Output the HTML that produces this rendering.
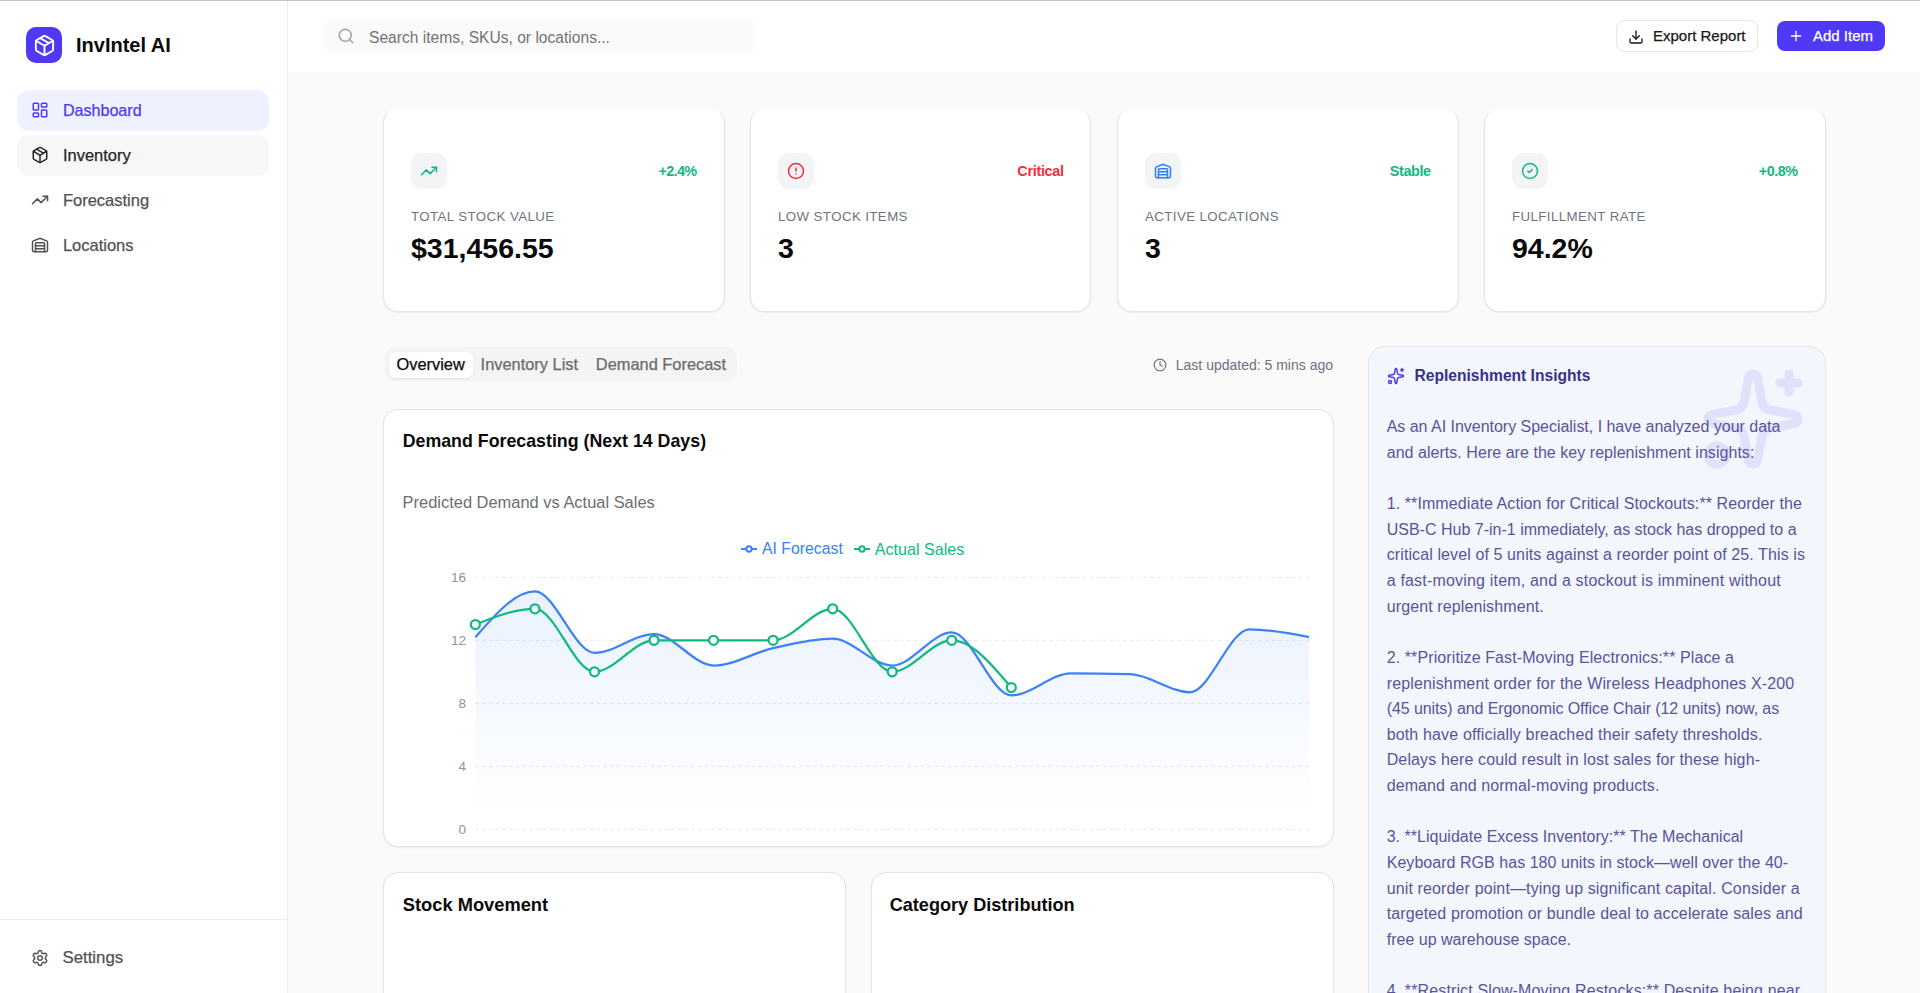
<!DOCTYPE html>
<html><head><meta charset="utf-8"><title>InvIntel AI</title>
<style>
*{box-sizing:border-box;margin:0;padding:0}
html,body{width:1920px;height:993px;overflow:hidden;background:#fafafa;font-family:"Liberation Sans",sans-serif;}
.t{position:absolute;white-space:nowrap}
.ic{position:absolute;display:block}
.box{position:absolute}
.card{position:absolute;background:#fff;border:1px solid #e3e3e3;border-radius:15px;box-shadow:0 1px 2px rgba(0,0,0,0.06)}
</style></head><body>

<div class="box" style="left:0;top:0;width:1920px;height:1px;background:#c4c4c4;z-index:10"></div>
<div class="box" style="left:0;top:0;width:288px;height:993px;background:#fff;border-right:1px solid #ececec"></div>
<div class="box" style="left:26px;top:27px;width:36px;height:36px;background:#4f39f6;border-radius:10px"></div>
<svg class="ic" style="left:32.86px;top:33.86px;width:23px;height:23px;" viewBox="0 0 24 24" fill="none" stroke="#fff" stroke-width="2" stroke-linecap="round" stroke-linejoin="round"><path d="M11 21.73a2 2 0 0 0 2 0l7-4A2 2 0 0 0 21 16V8a2 2 0 0 0-1-1.73l-7-4a2 2 0 0 0-2 0l-7 4A2 2 0 0 0 3 8v8a2 2 0 0 0 1 1.73z"/><path d="M12 22V12"/><path d="m3.3 7 7.703 4.734a2 2 0 0 0 1.994 0L20.7 7"/><path d="m7.5 4.27 9 5.15"/></svg>
<div class="t" style="left:76px;top:34.87px;font-size:20px;line-height:20px;color:#0a0a0a;font-weight:700;">InvIntel AI</div>
<div class="box" style="left:17px;top:90px;width:252px;height:41px;background:#eef2ff;border-radius:12px"></div>
<div class="box" style="left:17px;top:135px;width:252px;height:41px;background:#f7f7f7;border-radius:12px"></div>
<svg class="ic" style="left:30.7px;top:101.3px;width:18px;height:18px;" viewBox="0 0 24 24" fill="none" stroke="#4f39f6" stroke-width="2" stroke-linecap="round" stroke-linejoin="round"><rect width="7" height="9" x="3" y="3" rx="1"/><rect width="7" height="5" x="14" y="3" rx="1"/><rect width="7" height="9" x="14" y="12" rx="1"/><rect width="7" height="5" x="3" y="16" rx="1"/></svg>
<div class="t" style="left:62.9px;top:102.37px;font-size:16.1px;line-height:16.1px;color:#4f39f6;font-weight:400;-webkit-text-stroke:0.25px currentColor">Dashboard</div>
<svg class="ic" style="left:30.7px;top:146.3px;width:18px;height:18px;" viewBox="0 0 24 24" fill="none" stroke="#262626" stroke-width="2" stroke-linecap="round" stroke-linejoin="round"><path d="M11 21.73a2 2 0 0 0 2 0l7-4A2 2 0 0 0 21 16V8a2 2 0 0 0-1-1.73l-7-4a2 2 0 0 0-2 0l-7 4A2 2 0 0 0 3 8v8a2 2 0 0 0 1 1.73z"/><path d="M12 22V12"/><path d="m3.3 7 7.703 4.734a2 2 0 0 0 1.994 0L20.7 7"/><path d="m7.5 4.27 9 5.15"/></svg>
<div class="t" style="left:62.9px;top:147.03px;font-size:16.5px;line-height:16.5px;color:#262626;font-weight:400;-webkit-text-stroke:0.25px currentColor">Inventory</div>
<svg class="ic" style="left:30.7px;top:191.3px;width:18px;height:18px;" viewBox="0 0 24 24" fill="none" stroke="#525252" stroke-width="2" stroke-linecap="round" stroke-linejoin="round"><polyline points="22 7 13.5 15.5 8.5 10.5 2 17"/><polyline points="16 7 22 7 22 13"/></svg>
<div class="t" style="left:62.9px;top:192.03px;font-size:16.5px;line-height:16.5px;color:#525252;font-weight:400;-webkit-text-stroke:0.25px currentColor">Forecasting</div>
<svg class="ic" style="left:30.7px;top:236.3px;width:18px;height:18px;" viewBox="0 0 24 24" fill="none" stroke="#525252" stroke-width="2" stroke-linecap="round" stroke-linejoin="round"><path d="M18 21V10a1 1 0 0 0-1-1H7a1 1 0 0 0-1 1v11"/><path d="M22 19a2 2 0 0 1-2 2H4a2 2 0 0 1-2-2V8.35a2 2 0 0 1 1.26-1.86l8-3.2a2 2 0 0 1 1.48 0l8 3.2A2 2 0 0 1 22 8.35z"/><path d="M6 13h12"/><path d="M6 17h12"/></svg>
<div class="t" style="left:62.9px;top:237.03px;font-size:16.5px;line-height:16.5px;color:#525252;font-weight:400;-webkit-text-stroke:0.25px currentColor">Locations</div>
<div class="box" style="left:0;top:919px;width:287px;height:1px;background:#ececec"></div>
<svg class="ic" style="left:30.5px;top:949px;width:18px;height:18px;" viewBox="0 0 24 24" fill="none" stroke="#525252" stroke-width="2" stroke-linecap="round" stroke-linejoin="round"><path d="M9.671 4.136a2.34 2.34 0 0 1 4.659 0 2.34 2.34 0 0 0 3.319 1.915 2.34 2.34 0 0 1 2.33 4.033 2.34 2.34 0 0 0 0 3.831 2.34 2.34 0 0 1-2.33 4.033 2.34 2.34 0 0 0-3.319 1.915 2.34 2.34 0 0 1-4.659 0 2.34 2.34 0 0 0-3.32-1.915 2.34 2.34 0 0 1-2.33-4.033 2.34 2.34 0 0 0 0-3.831A2.34 2.34 0 0 1 6.35 6.051a2.34 2.34 0 0 0 3.319-1.915"/><circle cx="12" cy="12" r="3"/></svg>
<div class="t" style="left:62.5px;top:950.38px;font-size:16.8px;line-height:16.8px;color:#525252;font-weight:400;-webkit-text-stroke:0.25px currentColor">Settings</div>
<div class="box" style="left:288px;top:0;width:1632px;height:72px;background:#fff"></div>
<div class="box" style="left:324px;top:18px;width:431px;height:36px;background:#fafafa;border-radius:10px"></div>
<svg class="ic" style="left:336.75px;top:27.2px;width:18px;height:18px;" viewBox="0 0 24 24" fill="none" stroke="#a3a3a3" stroke-width="2" stroke-linecap="round" stroke-linejoin="round"><circle cx="11" cy="11" r="8"/><path d="m21 21-4.3-4.3"/></svg>
<div class="t" style="left:369px;top:29.59px;font-size:15.6px;line-height:15.6px;color:#737373;font-weight:400;">Search items, SKUs, or locations...</div>
<div class="box" style="left:1616px;top:20px;width:142px;height:32px;background:#fff;border:1px solid #e5e5e5;border-radius:8px"></div>
<svg class="ic" style="left:1628px;top:28.8px;width:16px;height:16px;" viewBox="0 0 24 24" fill="none" stroke="#171717" stroke-width="2" stroke-linecap="round" stroke-linejoin="round"><path d="M21 15v4a2 2 0 0 1-2 2H5a2 2 0 0 1-2-2v-4"/><polyline points="7 10 12 15 17 10"/><line x1="12" x2="12" y1="15" y2="3"/></svg>
<div class="t" style="left:1653px;top:28.10px;font-size:15px;line-height:15px;color:#171717;font-weight:400;-webkit-text-stroke:0.25px currentColor">Export Report</div>
<div class="box" style="left:1777px;top:21px;width:108px;height:30px;background:#4f39f6;border-radius:8px"></div>
<svg class="ic" style="left:1787.5px;top:28px;width:16px;height:16px;" viewBox="0 0 24 24" fill="none" stroke="#fff" stroke-width="2" stroke-linecap="round" stroke-linejoin="round"><path d="M5 12h14"/><path d="M12 5v14"/></svg>
<div class="t" style="left:1813px;top:28.10px;font-size:15px;line-height:15px;color:#fff;font-weight:400;-webkit-text-stroke:0.25px currentColor">Add Item</div>
<div class="card" style="left:383px;top:108px;width:342px;height:204px;border-top-color:#fff"></div>
<div class="box" style="left:411px;top:153px;width:36px;height:36px;background:#f3f4f6;border-radius:11px"></div>
<svg class="ic" style="left:420px;top:162px;width:18px;height:18px;" viewBox="0 0 24 24" fill="none" stroke="#10b981" stroke-width="2" stroke-linecap="round" stroke-linejoin="round"><polyline points="22 7 13.5 15.5 8.5 10.5 2 17"/><polyline points="16 7 22 7 22 13"/></svg>
<div class="t" style="right:1223.7px;top:164.11px;font-size:14.4px;line-height:14.4px;color:#10b981;font-weight:700;letter-spacing:-0.7px">+2.4%</div>
<div class="t" style="left:411px;top:209.94px;font-size:13.3px;line-height:13.3px;color:#6f7480;font-weight:400;letter-spacing:0.4px">TOTAL STOCK VALUE</div>
<div class="t" style="left:411px;top:234.07px;font-size:28.5px;line-height:28.5px;color:#0a0a0a;font-weight:700;">$31,456.55</div>
<div class="card" style="left:750px;top:108px;width:341px;height:204px;border-top-color:#fff"></div>
<div class="box" style="left:778px;top:153px;width:36px;height:36px;background:#f3f4f6;border-radius:11px"></div>
<svg class="ic" style="left:787px;top:162px;width:18px;height:18px;" viewBox="0 0 24 24" fill="none" stroke="#fb2c36" stroke-width="2" stroke-linecap="round" stroke-linejoin="round"><circle cx="12" cy="12" r="10"/><line x1="12" x2="12" y1="8" y2="12"/><line x1="12" x2="12.01" y1="16" y2="16"/></svg>
<div class="t" style="right:856.3px;top:164.11px;font-size:14.4px;line-height:14.4px;color:#fb2c36;font-weight:700;letter-spacing:-0.3px">Critical</div>
<div class="t" style="left:778px;top:209.94px;font-size:13.3px;line-height:13.3px;color:#6f7480;font-weight:400;letter-spacing:0.4px">LOW STOCK ITEMS</div>
<div class="t" style="left:778px;top:234.07px;font-size:28.5px;line-height:28.5px;color:#0a0a0a;font-weight:700;">3</div>
<div class="card" style="left:1117px;top:108px;width:342px;height:204px;border-top-color:#fff"></div>
<div class="box" style="left:1145px;top:153px;width:36px;height:36px;background:#f3f4f6;border-radius:11px"></div>
<svg class="ic" style="left:1154px;top:162px;width:18px;height:18px;" viewBox="0 0 24 24" fill="none" stroke="#2b7fff" stroke-width="2" stroke-linecap="round" stroke-linejoin="round"><path d="M18 21V10a1 1 0 0 0-1-1H7a1 1 0 0 0-1 1v11"/><path d="M22 19a2 2 0 0 1-2 2H4a2 2 0 0 1-2-2V8.35a2 2 0 0 1 1.26-1.86l8-3.2a2 2 0 0 1 1.48 0l8 3.2A2 2 0 0 1 22 8.35z"/><path d="M6 13h12"/><path d="M6 17h12"/></svg>
<div class="t" style="right:489.4000000000001px;top:164.11px;font-size:14.4px;line-height:14.4px;color:#10b981;font-weight:700;letter-spacing:-0.4px">Stable</div>
<div class="t" style="left:1145px;top:209.94px;font-size:13.3px;line-height:13.3px;color:#6f7480;font-weight:400;letter-spacing:0.4px">ACTIVE LOCATIONS</div>
<div class="t" style="left:1145px;top:234.07px;font-size:28.5px;line-height:28.5px;color:#0a0a0a;font-weight:700;">3</div>
<div class="card" style="left:1484px;top:108px;width:342px;height:204px;border-top-color:#fff"></div>
<div class="box" style="left:1512px;top:153px;width:36px;height:36px;background:#f3f4f6;border-radius:11px"></div>
<svg class="ic" style="left:1521px;top:162px;width:18px;height:18px;" viewBox="0 0 24 24" fill="none" stroke="#10b981" stroke-width="2" stroke-linecap="round" stroke-linejoin="round"><circle cx="12" cy="12" r="10"/><path d="m9 12 2 2 4-4"/></svg>
<div class="t" style="right:122.5px;top:164.11px;font-size:14.4px;line-height:14.4px;color:#10b981;font-weight:700;letter-spacing:-0.5px">+0.8%</div>
<div class="t" style="left:1512px;top:209.94px;font-size:13.3px;line-height:13.3px;color:#6f7480;font-weight:400;letter-spacing:0.4px">FULFILLMENT RATE</div>
<div class="t" style="left:1512px;top:234.07px;font-size:28.5px;line-height:28.5px;color:#0a0a0a;font-weight:700;">94.2%</div>
<div class="box" style="left:385px;top:347px;width:352px;height:35px;background:#f4f4f4;border-radius:10px"></div>
<div class="box" style="left:389px;top:352px;width:83.5px;height:26px;background:#fff;border-radius:7px;box-shadow:0 1px 2px rgba(0,0,0,0.08)"></div>
<div class="t" style="left:396.5px;top:356.12px;font-size:16.4px;line-height:16.4px;color:#0a0a0a;font-weight:400;-webkit-text-stroke:0.25px currentColor">Overview</div>
<div class="t" style="left:480.6px;top:356.12px;font-size:16.4px;line-height:16.4px;color:#6b6b6b;font-weight:400;-webkit-text-stroke:0.25px currentColor">Inventory List</div>
<div class="t" style="left:595.8px;top:356.12px;font-size:16.4px;line-height:16.4px;color:#6b6b6b;font-weight:400;-webkit-text-stroke:0.25px currentColor">Demand Forecast</div>
<svg class="ic" style="left:1153px;top:357.5px;width:14px;height:14px;" viewBox="0 0 24 24" fill="none" stroke="#737373" stroke-width="2" stroke-linecap="round" stroke-linejoin="round"><circle cx="12" cy="12" r="10"/><polyline points="12 6 12 12 16 14"/></svg>
<div class="t" style="left:1175.8px;top:358.05px;font-size:14px;line-height:14px;color:#6b7280;font-weight:400;">Last updated: 5 mins ago</div>
<div class="card" style="left:383px;top:409px;width:951px;height:438px"></div>
<div class="t" style="left:402.7px;top:432.63px;font-size:17.8px;line-height:17.8px;color:#0a0a0a;font-weight:700;">Demand Forecasting (Next 14 Days)</div>
<div class="t" style="left:402.6px;top:493.88px;font-size:16.45px;line-height:16.45px;color:#6e6e6e;font-weight:400;">Predicted Demand vs Actual Sales</div>
<svg class="ic" style="left:741px;top:541px;width:16px;height:16px" viewBox="0 0 32 32"><path stroke-width="4" fill="none" stroke="#3b82f6" d="M0,16h10.667A5.333,5.333,0,1,1,21.333,16H32M21.333,16A5.333,5.333,0,1,1,10.667,16"/></svg>
<div class="t" style="left:762px;top:541.13px;font-size:15.8px;line-height:15.8px;color:#3b82f6;font-weight:400;">AI Forecast</div>
<svg class="ic" style="left:853.7px;top:541px;width:16px;height:16px" viewBox="0 0 32 32"><path stroke-width="4" fill="none" stroke="#10b981" d="M0,16h10.667A5.333,5.333,0,1,1,21.333,16H32M21.333,16A5.333,5.333,0,1,1,10.667,16"/></svg>
<div class="t" style="left:874.8px;top:540.87px;font-size:16.1px;line-height:16.1px;color:#10b981;font-weight:400;">Actual Sales</div>
<svg class="ic" style="left:0;top:0;width:1920px;height:993px;overflow:visible" viewBox="0 0 1920 993"><defs><linearGradient id="gf" x1="0" y1="0" x2="0" y2="1"><stop offset="5%" stop-color="#3b82f6" stop-opacity="0.1"/><stop offset="95%" stop-color="#3b82f6" stop-opacity="0"/></linearGradient></defs><line x1="475.4" x2="1309.0" y1="577.30" y2="577.30" stroke="#e5e7eb" stroke-dasharray="3.375 3.375"/><text x="466" y="582.20" text-anchor="end" font-size="13.5" fill="#8e92a3" font-family="Liberation Sans">16</text><line x1="475.4" x2="1309.0" y1="640.30" y2="640.30" stroke="#e5e7eb" stroke-dasharray="3.375 3.375"/><text x="466" y="645.20" text-anchor="end" font-size="13.5" fill="#8e92a3" font-family="Liberation Sans">12</text><line x1="475.4" x2="1309.0" y1="703.30" y2="703.30" stroke="#e5e7eb" stroke-dasharray="3.375 3.375"/><text x="466" y="708.20" text-anchor="end" font-size="13.5" fill="#8e92a3" font-family="Liberation Sans">8</text><line x1="475.4" x2="1309.0" y1="766.30" y2="766.30" stroke="#e5e7eb" stroke-dasharray="3.375 3.375"/><text x="466" y="771.20" text-anchor="end" font-size="13.5" fill="#8e92a3" font-family="Liberation Sans">4</text><line x1="475.4" x2="1309.0" y1="829.30" y2="829.30" stroke="#e5e7eb" stroke-dasharray="3.375 3.375"/><text x="466" y="834.20" text-anchor="end" font-size="13.5" fill="#8e92a3" font-family="Liberation Sans">0</text><path d="M475.40,637.15C495.25,614.31,515.10,591.47,534.94,591.47C554.79,591.47,574.64,652.90,594.49,652.90C614.33,652.90,634.18,634.00,654.03,634.00C673.88,634.00,693.72,665.50,713.57,665.50C733.42,665.50,753.27,652.64,773.11,648.17C792.96,643.71,812.81,638.72,832.66,638.72C852.50,638.72,872.35,665.50,892.20,665.50C912.05,665.50,931.90,632.42,951.74,632.42C971.59,632.42,991.44,695.42,1011.29,695.42C1031.13,695.42,1050.98,673.38,1070.83,673.38C1090.68,673.38,1110.52,673.64,1130.37,674.16C1150.22,674.69,1170.07,692.27,1189.91,692.27C1209.76,692.27,1229.61,629.27,1249.46,629.27C1269.30,629.27,1289.15,633.21,1309.00,637.15L1309.0,829.3L475.4,829.3Z" fill="url(#gf)" stroke="none"/><path d="M475.40,637.15C495.25,614.31,515.10,591.47,534.94,591.47C554.79,591.47,574.64,652.90,594.49,652.90C614.33,652.90,634.18,634.00,654.03,634.00C673.88,634.00,693.72,665.50,713.57,665.50C733.42,665.50,753.27,652.64,773.11,648.17C792.96,643.71,812.81,638.72,832.66,638.72C852.50,638.72,872.35,665.50,892.20,665.50C912.05,665.50,931.90,632.42,951.74,632.42C971.59,632.42,991.44,695.42,1011.29,695.42C1031.13,695.42,1050.98,673.38,1070.83,673.38C1090.68,673.38,1110.52,673.64,1130.37,674.16C1150.22,674.69,1170.07,692.27,1189.91,692.27C1209.76,692.27,1229.61,629.27,1249.46,629.27C1269.30,629.27,1289.15,633.21,1309.00,637.15" fill="none" stroke="#3b82f6" stroke-width="2.25"/><path d="M475.40,624.55C495.25,616.67,515.10,608.80,534.94,608.80C554.79,608.80,574.64,671.80,594.49,671.80C614.33,671.80,634.18,640.30,654.03,640.30C673.88,640.30,693.72,640.30,713.57,640.30C733.42,640.30,753.27,640.30,773.11,640.30C792.96,640.30,812.81,608.80,832.66,608.80C852.50,608.80,872.35,671.80,892.20,671.80C912.05,671.80,931.90,640.30,951.74,640.30C971.59,640.30,991.44,663.92,1011.29,687.55" fill="none" stroke="#10b981" stroke-width="2.25"/><circle cx="475.40" cy="624.55" r="4.5" fill="#fff" stroke="#10b981" stroke-width="2.25"/><circle cx="534.94" cy="608.80" r="4.5" fill="#fff" stroke="#10b981" stroke-width="2.25"/><circle cx="594.49" cy="671.80" r="4.5" fill="#fff" stroke="#10b981" stroke-width="2.25"/><circle cx="654.03" cy="640.30" r="4.5" fill="#fff" stroke="#10b981" stroke-width="2.25"/><circle cx="713.57" cy="640.30" r="4.5" fill="#fff" stroke="#10b981" stroke-width="2.25"/><circle cx="773.11" cy="640.30" r="4.5" fill="#fff" stroke="#10b981" stroke-width="2.25"/><circle cx="832.66" cy="608.80" r="4.5" fill="#fff" stroke="#10b981" stroke-width="2.25"/><circle cx="892.20" cy="671.80" r="4.5" fill="#fff" stroke="#10b981" stroke-width="2.25"/><circle cx="951.74" cy="640.30" r="4.5" fill="#fff" stroke="#10b981" stroke-width="2.25"/><circle cx="1011.29" cy="687.55" r="4.5" fill="#fff" stroke="#10b981" stroke-width="2.25"/></svg>
<div class="card" style="left:383px;top:872px;width:463px;height:200px"></div>
<div class="t" style="left:402.8px;top:895.51px;font-size:18.3px;line-height:18.3px;color:#0a0a0a;font-weight:700;">Stock Movement</div>
<div class="card" style="left:871px;top:872px;width:463px;height:200px"></div>
<div class="t" style="left:889.7px;top:895.68px;font-size:18.1px;line-height:18.1px;color:#0a0a0a;font-weight:700;">Category Distribution</div>
<div class="box" style="left:1367.5px;top:345.5px;width:458px;height:700px;background:#f4f6fe;border:1px solid #e4e4e8;border-radius:17px"></div>
<svg class="ic" style="left:1698.5px;top:364.75px;width:108px;height:108px;opacity:0.13" viewBox="0 0 24 24" fill="none" stroke="#6366f1" stroke-width="2" stroke-linecap="round" stroke-linejoin="round"><path d="M11.017 2.814a1 1 0 0 1 1.966 0l1.051 5.558a2 2 0 0 0 1.594 1.594l5.558 1.051a1 1 0 0 1 0 1.966l-5.558 1.051a2 2 0 0 0-1.594 1.594l-1.051 5.558a1 1 0 0 1-1.966 0l-1.051-5.558a2 2 0 0 0-1.594-1.594l-5.558-1.051a1 1 0 0 1 0-1.966l5.558-1.051a2 2 0 0 0 1.594-1.594z"/><path d="M20 2v4"/><path d="M22 4h-4"/><circle cx="4" cy="20" r="2"/></svg>
<svg class="ic" style="left:1386.5px;top:367px;width:18px;height:18px;" viewBox="0 0 24 24" fill="none" stroke="#4f39f6" stroke-width="2" stroke-linecap="round" stroke-linejoin="round"><path d="M11.017 2.814a1 1 0 0 1 1.966 0l1.051 5.558a2 2 0 0 0 1.594 1.594l5.558 1.051a1 1 0 0 1 0 1.966l-5.558 1.051a2 2 0 0 0-1.594 1.594l-1.051 5.558a1 1 0 0 1-1.966 0l-1.051-5.558a2 2 0 0 0-1.594-1.594l-5.558-1.051a1 1 0 0 1 0-1.966l5.558-1.051a2 2 0 0 0 1.594-1.594z"/><path d="M20 2v4"/><path d="M22 4h-4"/><circle cx="4" cy="20" r="2"/></svg>
<div class="t" style="left:1414.5px;top:368.29px;font-size:15.6px;line-height:15.6px;color:#35318a;font-weight:700;">Replenishment Insights</div>
<div class="t" style="left:1386.7px;top:419.16px;font-size:16px;line-height:16px;color:#57549a;font-weight:400;letter-spacing:-0.023px">As an AI Inventory Specialist, I have analyzed your data</div>
<div class="t" style="left:1386.7px;top:444.80px;font-size:16px;line-height:16px;color:#57549a;font-weight:400;letter-spacing:0.042px">and alerts. Here are the key replenishment insights:</div>
<div class="t" style="left:1386.7px;top:496.08px;font-size:16px;line-height:16px;color:#57549a;font-weight:400;letter-spacing:0.092px">1. **Immediate Action for Critical Stockouts:** Reorder the</div>
<div class="t" style="left:1386.7px;top:521.72px;font-size:16px;line-height:16px;color:#57549a;font-weight:400;letter-spacing:0.004px">USB-C Hub 7-in-1 immediately, as stock has dropped to a</div>
<div class="t" style="left:1386.7px;top:547.36px;font-size:16px;line-height:16px;color:#57549a;font-weight:400;letter-spacing:0.108px">critical level of 5 units against a reorder point of 25. This is</div>
<div class="t" style="left:1386.7px;top:573.00px;font-size:16px;line-height:16px;color:#57549a;font-weight:400;letter-spacing:0.186px">a fast-moving item, and a stockout is imminent without</div>
<div class="t" style="left:1386.7px;top:598.64px;font-size:16px;line-height:16px;color:#57549a;font-weight:400;letter-spacing:0.111px">urgent replenishment.</div>
<div class="t" style="left:1386.7px;top:649.92px;font-size:16px;line-height:16px;color:#57549a;font-weight:400;letter-spacing:0.101px">2. **Prioritize Fast-Moving Electronics:** Place a</div>
<div class="t" style="left:1386.7px;top:675.56px;font-size:16px;line-height:16px;color:#57549a;font-weight:400;letter-spacing:0.141px">replenishment order for the Wireless Headphones X-200</div>
<div class="t" style="left:1386.7px;top:701.20px;font-size:16px;line-height:16px;color:#57549a;font-weight:400;letter-spacing:-0.086px">(45 units) and Ergonomic Office Chair (12 units) now, as</div>
<div class="t" style="left:1386.7px;top:726.84px;font-size:16px;line-height:16px;color:#57549a;font-weight:400;letter-spacing:0.148px">both have officially breached their safety thresholds.</div>
<div class="t" style="left:1386.7px;top:752.48px;font-size:16px;line-height:16px;color:#57549a;font-weight:400;letter-spacing:0.13px">Delays here could result in lost sales for these high-</div>
<div class="t" style="left:1386.7px;top:778.12px;font-size:16px;line-height:16px;color:#57549a;font-weight:400;letter-spacing:0.098px">demand and normal-moving products.</div>
<div class="t" style="left:1386.7px;top:829.40px;font-size:16px;line-height:16px;color:#57549a;font-weight:400;letter-spacing:0.021px">3. **Liquidate Excess Inventory:** The Mechanical</div>
<div class="t" style="left:1386.7px;top:855.04px;font-size:16px;line-height:16px;color:#57549a;font-weight:400;letter-spacing:0.041px">Keyboard RGB has 180 units in stock—well over the 40-</div>
<div class="t" style="left:1386.7px;top:880.68px;font-size:16px;line-height:16px;color:#57549a;font-weight:400;letter-spacing:0.129px">unit reorder point—tying up significant capital. Consider a</div>
<div class="t" style="left:1386.7px;top:906.32px;font-size:16px;line-height:16px;color:#57549a;font-weight:400;letter-spacing:0.122px">targeted promotion or bundle deal to accelerate sales and</div>
<div class="t" style="left:1386.7px;top:931.96px;font-size:16px;line-height:16px;color:#57549a;font-weight:400;letter-spacing:0.011px">free up warehouse space.</div>
<div class="t" style="left:1386.7px;top:983.24px;font-size:16px;line-height:16px;color:#57549a;font-weight:400;letter-spacing:0.128px">4. **Restrict Slow-Moving Restocks:** Despite being near</div>
</body></html>
